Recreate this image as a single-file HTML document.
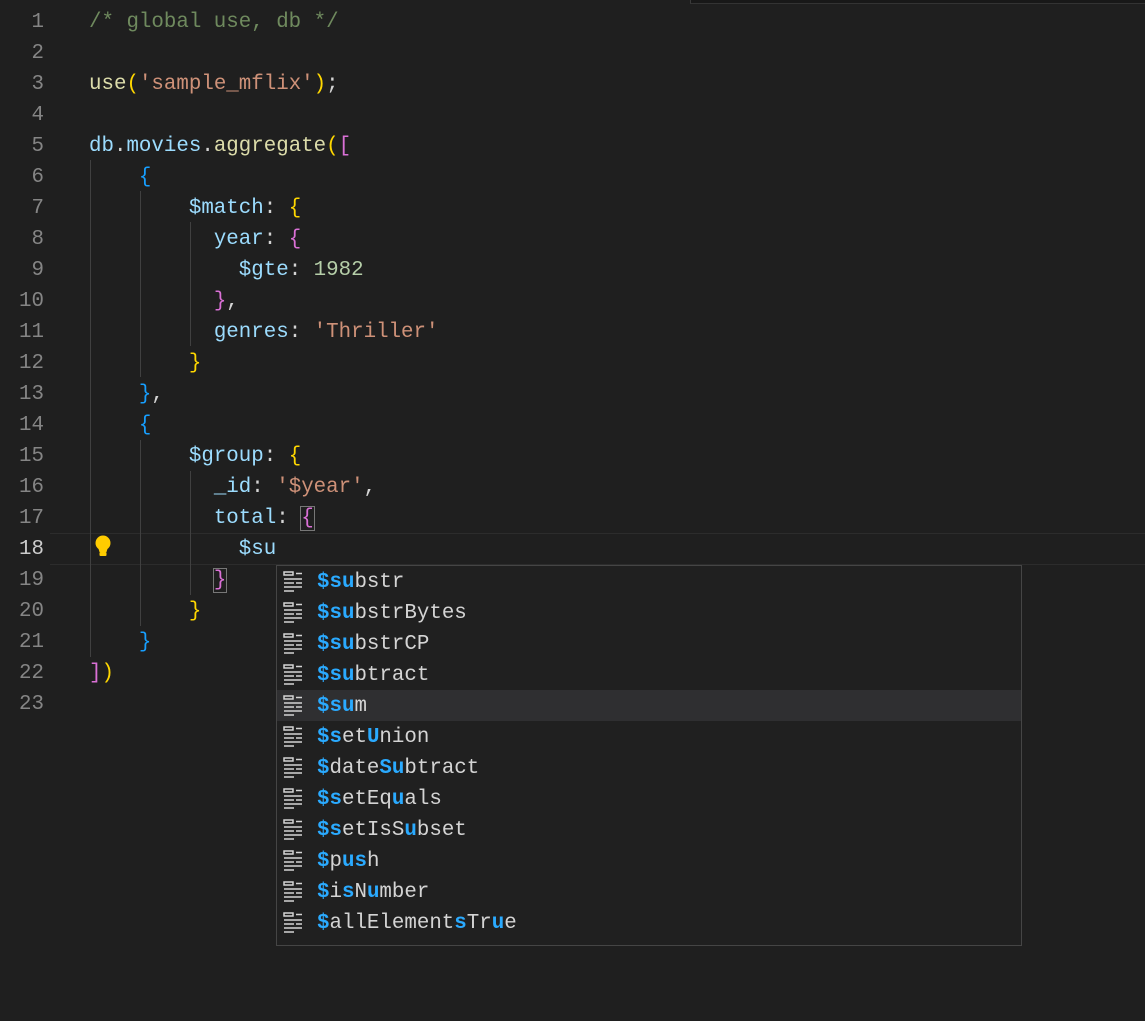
<!DOCTYPE html>
<html><head><meta charset="utf-8"><style>
body{margin:0;background:#1f1f1f;width:1145px;height:1019px;overflow:hidden;position:relative;font-family:"Liberation Mono",monospace;font-size:20.8px;}
.ln{position:absolute;left:0;width:44px;text-align:right;color:#858585;line-height:31px;height:31px}
.ln.cur{color:#cccccc}
.c{position:absolute;left:89px;white-space:pre;line-height:31px;height:31px;color:#d4d4d4}
.cm{color:#6f8a5e}.s{color:#ce9178}.k{color:#9cdcfe}.f{color:#dcdcaa}.y{color:#ffd700}.p{color:#da70d6}.b{color:#179fff}.n{color:#b5cea8}
.g{position:absolute;width:1px;background:#404040}
.sg{position:absolute;left:276px;top:565px;width:744px;height:379px;background:#202020;border:1px solid #454545}
.r{position:absolute;left:0;width:744px;height:31px;line-height:31px;color:#d4d4d4;white-space:pre}
.r .t{position:absolute;left:40px;top:1px}
.r svg{position:absolute;left:6px;top:5px}
.h{color:#2aaaff;font-weight:bold}
.sel{background:#2f2f31}
.code{position:absolute;left:0;top:2px;width:1145px;height:1019px}
</style></head><body>
<div style="position:absolute;left:690px;top:0;width:455px;height:3px;background:#181818;border-left:1px solid #3a3a3a;border-bottom:1px solid #333"></div>
<div style="position:absolute;left:50px;top:533px;width:1095px;height:30px;border-top:1px solid #2c2c2c;border-bottom:1px solid #2c2c2c"></div>
<div class="g" style="left:90px;top:160px;height:497px"></div>
<div class="g" style="left:140px;top:191px;height:186px"></div>
<div class="g" style="left:140px;top:440px;height:186px"></div>
<div class="g" style="left:190px;top:222px;height:124px"></div>
<div class="g" style="left:190px;top:471px;height:124px"></div>
<div class="code">
<div class="ln" style="top:5px">1</div><div class="c" style="top:5px"><span class="cm">/* global use, db */</span></div>
<div class="ln" style="top:36px">2</div>
<div class="ln" style="top:67px">3</div><div class="c" style="top:67px"><span class="f">use</span><span class="y">(</span><span class="s">'sample_mflix'</span><span class="y">)</span>;</div>
<div class="ln" style="top:98px">4</div>
<div class="ln" style="top:129px">5</div><div class="c" style="top:129px"><span class="k">db</span>.<span class="k">movies</span>.<span class="f">aggregate</span><span class="y">(</span><span class="p">[</span></div>
<div class="ln" style="top:160px">6</div><div class="c" style="top:160px">    <span class="b">{</span></div>
<div class="ln" style="top:191px">7</div><div class="c" style="top:191px">        <span class="k">$match</span>: <span class="y">{</span></div>
<div class="ln" style="top:222px">8</div><div class="c" style="top:222px">          <span class="k">year</span>: <span class="p">{</span></div>
<div class="ln" style="top:253px">9</div><div class="c" style="top:253px">            <span class="k">$gte</span>: <span class="n">1982</span></div>
<div class="ln" style="top:284px">10</div><div class="c" style="top:284px">          <span class="p">}</span>,</div>
<div class="ln" style="top:315px">11</div><div class="c" style="top:315px">          <span class="k">genres</span>: <span class="s">'Thriller'</span></div>
<div class="ln" style="top:346px">12</div><div class="c" style="top:346px">        <span class="y">}</span></div>
<div class="ln" style="top:377px">13</div><div class="c" style="top:377px">    <span class="b">}</span>,</div>
<div class="ln" style="top:408px">14</div><div class="c" style="top:408px">    <span class="b">{</span></div>
<div class="ln" style="top:439px">15</div><div class="c" style="top:439px">        <span class="k">$group</span>: <span class="y">{</span></div>
<div class="ln" style="top:470px">16</div><div class="c" style="top:470px">          <span class="k">_id</span>: <span class="s">'$year'</span>,</div>
<div class="ln" style="top:501px">17</div><div class="c" style="top:501px">          <span class="k">total</span>: <span class="p" style="outline:1px solid #777">{</span></div>
<div class="ln cur" style="top:532px">18</div><div class="c" style="top:532px">            <span class="k">$su</span></div>
<div class="ln" style="top:563px">19</div><div class="c" style="top:563px">          <span class="p" style="outline:1px solid #777">}</span></div>
<div class="ln" style="top:594px">20</div><div class="c" style="top:594px">        <span class="y">}</span></div>
<div class="ln" style="top:625px">21</div><div class="c" style="top:625px">    <span class="b">}</span></div>
<div class="ln" style="top:656px">22</div><div class="c" style="top:656px"><span class="p">]</span><span class="y">)</span></div>
<div class="ln" style="top:687px">23</div>
</div>
<svg style="position:absolute;left:93px;top:535px" width="20" height="24" viewBox="0 0 20 24"><circle cx="10" cy="8" r="7.5" fill="#ffcc00"/><path d="M5 12 L15 12 L13.5 17 L6.5 17 Z" fill="#ffcc00"/><rect x="6.5" y="17" width="7" height="4" rx="1" fill="#ffcc00"/></svg>

<div class="sg">
<svg width="0" height="0" style="position:absolute"><defs><g id="ic" fill="none" stroke="#d4d4d4" stroke-width="1.5"><rect x="1" y="1" width="9" height="3"/><path d="M13 2.5h6M1 8h18M1 12h10M13 12h6M1 16h18M1 20h10"/></g></defs></svg>
<div class="r" style="top:0"><svg width="20" height="22"><use href="#ic"/></svg><span class="t"><span class="h">$su</span>bstr</span></div>
<div class="r" style="top:31px"><svg width="20" height="22"><use href="#ic"/></svg><span class="t"><span class="h">$su</span>bstrBytes</span></div>
<div class="r" style="top:62px"><svg width="20" height="22"><use href="#ic"/></svg><span class="t"><span class="h">$su</span>bstrCP</span></div>
<div class="r" style="top:93px"><svg width="20" height="22"><use href="#ic"/></svg><span class="t"><span class="h">$su</span>btract</span></div>
<div class="r sel" style="top:124px"><svg width="20" height="22"><use href="#ic"/></svg><span class="t"><span class="h">$su</span>m</span></div>
<div class="r" style="top:155px"><svg width="20" height="22"><use href="#ic"/></svg><span class="t"><span class="h">$s</span>et<span class="h">U</span>nion</span></div>
<div class="r" style="top:186px"><svg width="20" height="22"><use href="#ic"/></svg><span class="t"><span class="h">$</span>date<span class="h">Su</span>btract</span></div>
<div class="r" style="top:217px"><svg width="20" height="22"><use href="#ic"/></svg><span class="t"><span class="h">$s</span>etEq<span class="h">u</span>als</span></div>
<div class="r" style="top:248px"><svg width="20" height="22"><use href="#ic"/></svg><span class="t"><span class="h">$s</span>etIsS<span class="h">u</span>bset</span></div>
<div class="r" style="top:279px"><svg width="20" height="22"><use href="#ic"/></svg><span class="t"><span class="h">$</span>p<span class="h">us</span>h</span></div>
<div class="r" style="top:310px"><svg width="20" height="22"><use href="#ic"/></svg><span class="t"><span class="h">$</span>i<span class="h">s</span>N<span class="h">u</span>mber</span></div>
<div class="r" style="top:341px"><svg width="20" height="22"><use href="#ic"/></svg><span class="t"><span class="h">$</span>allElement<span class="h">s</span>Tr<span class="h">u</span>e</span></div>
</div>
</body></html>
